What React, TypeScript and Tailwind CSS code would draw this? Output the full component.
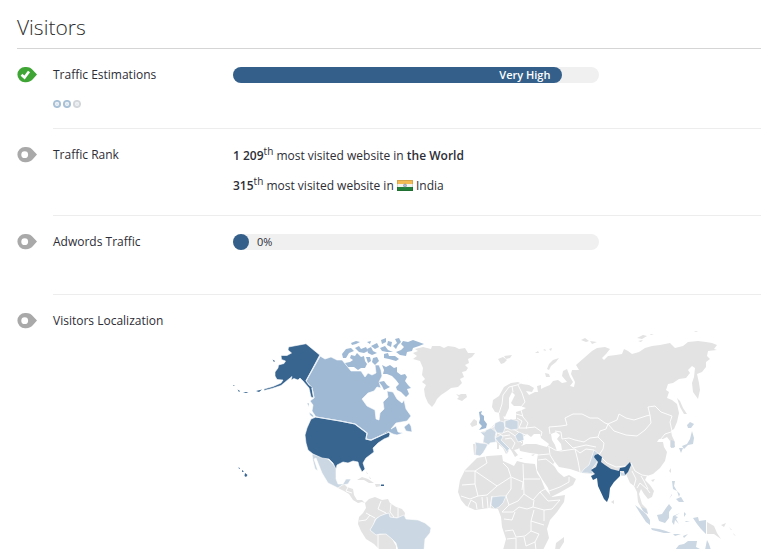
import React from 'react';

type Shape = { name: string; d: string };

const GREY = '#e3e3e3';
const PALE = '#cbd7e2';
const MEDIUM = '#9fb9d4';
const DARK = '#386590';

const greyLand: Shape[] = [
  { name: 'Greenland', d: 'M413 352L418 350L415 348L423 346L431 348L432 345L440 345L444 347L448 345L455 346L459 348L465 347L468 352L475 352L472 356L468 358L469 362L465 364L468 367L466 370L462 371L464 376L460 378L462 382L458 386L451 387L447 390L441 394L437 398L435 402L432 406L428 402L425 395L424 388L426 384L422 381L425 378L422 374L423 367L420 360L413 358L417 355Z' },
  { name: 'Iceland', d: 'M456 393L459 394L461 393L466 393L467 396L462 400L457 398L459 396Z' },
  { name: 'Central America', d: 'M338 487L341 485L344 483L347 486L353 488L354 494L357 499L362 499L365 502L362 501L358 502L353 499L349 493L344 490Z' },
  { name: 'Cuba', d: 'M357 479L362 476L368 478L374 482L369 482L364 479Z' },
  { name: 'Hispaniola', d: 'M375 483L380 483L381 485L376 486Z' },
  { name: 'South America north', d: 'M365 502L369 498L375 496L382 499L388 498L390 502L396 506L402 508L405 512L404 517L390 516L387 512L380 515L375 518L373 524L370 529L376 534L386 533L392 538L396 545L396 549L380 549L374 543L366 538L361 530L358 523L359 516L363 512L366 507Z' },
  { name: 'Russia and Asia', d: 'M522 383L529 384L534 387L532 391L526 390L529 394L535 391L538 391L537 385L541 384L541 388L545 386L550 384L553 380L558 379L562 382L567 381L562 375L563 370L567 368L570 376L573 381L570 385L574 386L575 381L571 373L572 369L579 369L576 364L584 357L592 350L597 347L605 346L610 348L606 353L602 357L604 359L608 355L616 354L622 353L624 348L628 350L632 353L639 351L645 347L652 345L660 344L670 342L675 347L683 345L688 341L698 340L706 341L712 342L717 344L714 348L717 349L708 350L707 355L710 358L706 361L706 366L702 371L697 373L699 382L700 389L698 398L693 391L692 382L694 376L695 367L692 365L688 369L690 372L686 377L679 378L673 382L668 383L666 389L669 391L667 397L672 399L677 403L679 412L677 421L674 428L671 430L672 435L675 441L674 447L670 446L670 440L667 436L663 438L659 438L657 441L663 441L664 446L667 451L665 460L660 467L653 473L647 475L645 479L650 484L654 490L652 496L648 498L644 493L641 488L639 493L642 503L647 508L648 513L643 510L638 501L637 491L634 485L630 482L626 473L620 471L610 469L600 474L591 473L582 472L570 468L559 466L555 461L553 463L558 471L564 476L569 474L576 478L573 484L559 492L551 496L548 487L542 478L537 469L537 459L538 453L530 452L520 450L519 446L526 443L536 443L547 446L549 443L541 437L540 433L534 433L531 436L527 433L523 436L523 443L518 448L514 449L518 454L515 456L511 449L503 441L499 439L506 444L509 450L506 453L503 447L495 440L487 442L484 449L480 454L474 454L473 443L483 442L485 434L481 431L488 429L494 424L500 420L499 412L503 412L504 418L510 419L516 418L516 411L522 409L526 407L520 405L514 405L511 402L515 394L512 391L509 397L509 407L505 416L500 412L495 411L492 406L493 399L499 395L504 386L511 382L518 381Z' },
  { name: 'Africa', d: 'M477 457L488 455L502 454L503 460L510 463L514 465L517 460L525 462L535 463L537 472L541 478L545 488L552 496L565 494L564 501L557 511L550 519L547 528L549 537L543 549L503 549L506 538L502 526L501 516L498 508L489 507L475 509L466 505L461 499L458 491L460 479L465 469L472 462Z' },
  { name: 'Madagascar', d: 'M564 536L564 541L559 549L555 549L556 542Z' },
  { name: 'Papua New Guinea', d: 'M707 521L714 525L717 532L721 538L714 533L707 533Z' },
];

// too small to carry an outline of their own
const greyIslands: Shape[] = [
  { name: 'Svalbard', d: 'M498 358L503 356L507 359L504 362L501 363Z M504 355L512 354L510 357L506 358Z' },
  { name: 'Franz Josef Land', d: 'M535 352L538 350L539 352Z M543 349L545 348L546 350Z M549 348L552 347L551 350Z' },
  { name: 'Novaya Zemlya', d: 'M547 368L549 363L553 359L559 357L556 361L551 365L549 369Z M545 372L549 373L550 376L546 376Z' },
  { name: 'Severnaya Zemlya', d: 'M581 339L585 337L589 340L586 341Z M590 340L597 341L592 343Z' },
  { name: 'New Siberian Islands', d: 'M637 337L643 334L647 335L642 338Z M638 340L643 339L641 341Z M650 333L654 333L651 334Z M694 330L698 330L696 331Z' },
  { name: 'Sakhalin', d: 'M677 397L680 400L683 407L687 413L684 413L680 406Z' },
  { name: 'Ireland', d: 'M470 423L474 418L477 420L477 424L472 426Z' },
  { name: 'Taiwan and Hainan', d: 'M669 470L671 467L671 472Z M651 479L655 478L653 481Z' },
  { name: 'Sri Lanka', d: 'M611 501L614 499L614 503Z' },
  { name: 'Bahamas', d: 'M366 470L368 473L367 473Z M369 475L371 478L370 478Z' },
  { name: 'Bismarck Islands', d: 'M721 524L726 522L724 526Z M729 526L732 529L731 529Z M733 532L736 535L734 534Z' },
  { name: 'Sardinia and Crete', d: 'M497 442L499 442L499 448L497 448Z M519 457L523 457L521 458Z' },
  { name: 'Cyprus', d: 'M531 454L535 453L533 455Z' },
];

const paleLand: Shape[] = [
  { name: 'Mexico', d: 'M312 453L322 456L328 458L333 463L336 467L336 478L338 483L343 483L346 478L351 478L348 483L342 484L338 487L328 482L322 472L316 457L314 458L318 470L315 468L313 460Z' },
  { name: 'Brazil', d: 'M385 513L389 512L390 516L397 517L404 514L406 518L418 519L425 522L431 527L430 532L425 538L424 549L398 549L396 542L392 538L386 533L380 533L376 534L370 529L373 524L376 518L380 515Z' },
  { name: 'Spain', d: 'M475 441L480 442L488 443L486 447L483 452L480 455L475 454L476 446Z' },
  { name: 'France', d: 'M480 431L485 431L486 429L491 427L496 431L495 436L496 441L490 442L489 444L483 441L484 435Z' },
  { name: 'Germany', d: 'M495 422L500 420L504 421L505 427L503 432L497 432L494 427Z' },
  { name: 'Poland', d: 'M505 420L511 418L518 420L518 428L511 429L505 426Z' },
  { name: 'Italy', d: 'M495 437L501 434L503 436L501 439L505 443L510 448L508 449L508 453L505 448L498 441Z' },
  { name: 'Romania', d: 'M515 435L519 431L523 433L524 439L518 441Z' },
  { name: 'Nigeria', d: 'M492 496L500 495L506 495L503 502L499 506L495 508L491 504Z' },
  { name: 'Pakistan', d: 'M594 449L599 453L597 461L592 468L593 473L587 472L581 472L584 468L589 464Z' },
  { name: 'Bangladesh', d: 'M619 470L624 472L626 475L621 475Z' },
];

const paleIslands: Shape[] = [
  { name: 'Japan', d: 'M692 430L694 437L693 443L688 444L684 448L682 445L687 443L690 438Z M687 424L690 421L694 423L691 427L688 427Z M679 447L683 447L681 452Z' },
  { name: 'South Korea', d: 'M671 439L674 440L675 446L671 447Z' },
  { name: 'Philippines', d: 'M672 480L675 480L674 485L677 490L673 488Z M677 490L680 493L679 496Z M676 498L681 496L684 501L679 501Z M669 498L672 493L672 494Z' },
  { name: 'Malaysia', d: 'M641 506L646 508L648 513L644 511Z' },
  { name: 'Sumatra', d: 'M635 504L639 507L646 513L650 519L650 524L646 521L640 512Z' },
  { name: 'Java', d: 'M651 527L659 528L666 530L671 532L664 532L652 529Z M673 533L681 533L675 535Z M683 535L688 533L684 537Z' },
  { name: 'Borneo', d: 'M657 514L662 513L666 507L669 503L672 507L669 511L669 517L665 522L659 520Z' },
  { name: 'Sulawesi', d: 'M673 515L680 512L675 515L678 516L676 518L679 523L675 519L674 524L672 521Z' },
  { name: 'Moluccas', d: 'M684 511L686 513L684 516Z M685 520L690 520L686 521Z' },
  { name: 'West Papua', d: 'M693 517L698 516L699 520L706 519L706 533L701 528L697 523Z' },
  { name: 'Australia', d: 'M675 549L679 544L684 543L688 540L697 540L696 546L702 549Z M705 549L707 539L709 543L711 549Z' },
];

const mediumLand: Shape[] = [
  { name: 'Canada', d: 'M320 355L325 358L331 356L337 359L342 359L347 365L351 370L357 370L361 370L365 376L368 372L372 374L376 372L375 364L379 364L381 369L382 375L379 381L381 387L377 386L374 390L368 392L362 398L367 405L375 409L376 418L379 419L380 412L384 408L383 401L388 396L387 390L393 391L397 398L402 402L404 399L406 408L411 415L407 420L396 422L391 428L396 425L398 431L403 432L397 434L393 433L389 431L380 435L371 439L366 438L367 432L355 423L340 420L316 416L312 410L313 404L310 400L314 397L312 387L306 380Z' },
  { name: 'Newfoundland', d: 'M404 426L409 422L411 425L412 431L406 430Z' },
  { name: 'Vancouver Island', d: 'M309 411L313 414L314 417L310 414Z' },
  { name: 'Haida Gwaii', d: 'M307 402L309 402L309 406Z' },
];

const arcticIslands: Shape[] = [
  { name: 'Baffin Island', d: 'M382 364L386 366L390 364L394 367L397 366L397 371L401 374L405 373L407 376L405 380L408 384L411 387L407 388L409 393L406 396L401 391L397 389L396 386L399 383L396 379L392 375L387 373L383 373L384 369Z' },
  { name: 'Southampton Island', d: 'M379 381L384 380L387 384L390 386L384 389L382 385Z' },
  { name: 'Ellesmere Island', d: 'M403 340L408 341L413 339L424 343L419 345L413 347L412 350L407 351L406 355L400 354L396 351L401 349L404 346L401 343Z' },
  { name: 'Axel Heiberg', d: 'M395 338L399 337L401 341L398 344L396 348L393 345L397 342Z' },
  { name: 'Devon Island', d: 'M384 353L388 352L389 355L395 355L399 358L396 360L389 358L384 357Z' },
  { name: 'Victoria Island', d: 'M351 354L355 355L357 352L361 356L364 355L365 360L367 363L365 367L361 367L358 369L354 366L348 366L345 362L350 361L353 359L350 357Z' },
  { name: 'Banks Island', d: 'M342 353L346 348L351 347L354 350L349 352L346 357L343 357Z' },
  { name: 'Prince of Wales Island', d: 'M366 356L370 356L371 360L368 362Z' },
  { name: 'Somerset Island', d: 'M373 357L377 356L379 360L375 364L372 361Z' },
  { name: 'Melville Island', d: 'M355 347L359 345L361 348L366 346L368 350L364 352L359 351Z' },
  { name: 'Prince Patrick Island', d: 'M351 342L356 340L360 341L356 343L352 344Z' },
  { name: 'Bathurst Island', d: 'M367 348L371 346L373 350L377 352L372 354L368 352Z' },
  { name: 'Ringnes Islands', d: 'M367 341L371 340L370 343Z M371 345L377 342L379 346L375 348Z M381 339L386 337L386 341L382 343Z M380 347L385 345L388 349L393 351L387 351L382 350Z M388 340L392 341L391 346L387 344Z' },
];

const darkLand: Shape[] = [
  { name: 'Alaska', d: 'M288.5 346L306 342.7L319.7 354L306 380L309 384L312 386L313.5 397L311 396L309 387L303 380L300 377L298 379L294 377.5L291 379L292 375.5L287 379.5L281 384.5L272 387.5L264 389.5L264 388L273 385.5L281 382L283 379L277 378.5L275 375L275 371L278 367L278.5 364L284 362.5L285.5 360L281.5 358.5L281 354.5L287 354.5L291.5 352L288 349Z' },
  { name: 'United States', d: 'M316 416L340 420L355 423L367 432L366 438L371 439L380 435L388 430L390 433L389 436L384 438L378 442L373 447L374 451L366 457L363 462L365 468L362 471L359 465L358 461L353 460L348 462L343 461L337 464L336 468L333 462L329 458L322 457L313 453L308 449L306 442L305 434L307 427L311 418Z' },
];

const darkIslands: Shape[] = [
  { name: 'Hawaii', d: 'M245 472L247.5 474L246 476L244.5 475Z M242 469L244 470.5L242 471Z M238 466.5L240 467L239.5 468Z' },
  { name: 'Puerto Rico', d: 'M381 483.5L384 483.5L384 485L381 485Z' },
  { name: 'Aleutian Islands', d: 'M256 390L262 388.5L259 391Z M237.5 388.5L240 390L239 391Z M243 391L248.5 391L246 392Z M233 384L234.5 384L234 385Z' },
  { name: 'Saint Lawrence Island', d: 'M272.5 358.5L275 360L274 361Z' },
];

const india =
  'M595 454L598 453L602 456L601 461L605 464L611 468L619 470L620 467L625 466L630 461L631 464L628 471L625 474L624 470L620 470L620 475L614 481L610 487L609 496L607 501L604 498L598 485L597 477L593 479L591 475L595 473L591 469L596 466L598 461L594 456Z';

// country outlines that run inside the grey land masses
const borders = [
  // Nordics and eastern Europe
  'M499 412L502 403L503 394L509 386L517 384L521 382', 'M513 391L512 385', 'M518 384L522 392L525 401L521 406',
  'M521 409L523 416L528 422L526 427L535 426L542 431L541 435', 'M516 413L523 415', 'M517 417L522 420L519 427L527 427',
  'M505 419L505 427L515 429L520 432L526 434', 'M502 432L508 430L514 434L522 442', 'M496 431L503 435L510 434', 'M505 438L511 437L515 442L512 448', 'M487 429L495 425L497 431L495 439',
  // Kazakhstan, Mongolia, China
  'M550 433L549 426L561 425L567 424L565 417L573 413L582 413L590 417L598 417L605 422L608 423L606 428L600 430L598 436L590 437L584 441L575 439L569 437L562 438L561 431L555 430',
  'M608 423L617 419L619 413L626 417L634 419L646 415L650 414L648 406L655 405L661 411L672 415L670 421L672 430', 'M608 423L614 430L626 434L637 435L645 429L651 422L650 414',
  'M598 436L604 442L603 448L599 454L607 462L616 466L626 465L631 462L635 470L642 474L648 475', 'M660 439L665 433L671 431',
  // Middle East
  'M548 445L555 449L561 450L575 448L580 452L586 448L594 449', 'M565 439L573 447L586 444L596 446', 'M575 448L578 460L580 471', 'M549 446L550 454L555 462', 'M538 454L549 453', 'M538 459L546 458L556 466', 'M549 490L560 486L569 481L569 476',
  // Indochina
  'M632 470L636 478L634 485', 'M637 487L640 482L647 488L650 492', 'M641 475L644 480L648 488',
  // Africa
  'M485 455L487 462L475 470L465 470', 'M475 470L475 483L462 484', 'M475 470L497 485L511 476L508 467L503 462', 'M523 463L524 493', 'M523 478L540 478', 'M511 476L523 481L522 489', 'M475 483L478 495L487 494L497 485', 'M478 495L470 498L461 495', 'M468 506L471 499L476 502L477 508', 'M482 496L483 507', 'M487 496L488 507', 'M506 495L511 488L511 477', 'M506 495L509 504L518 500L524 493L533 499L540 491L545 488', 'M509 504L502 511L513 511L519 506L527 508L533 506L534 499', 'M540 491L548 500L560 499L552 508L544 509L533 506', 'M544 509L544 520', 'M534 509L531 520L544 524', 'M504 518L512 519L515 511', 'M505 530L513 529L516 536L525 535L531 530L531 520', 'M507 538L516 537L516 549', 'M524 536L526 545L535 541L539 533L531 530', 'M535 541L536 549', 'M492 495L490 507',
  // Andes and Guianas
  'M381 500L378 508L386 512', 'M366 512L375 517', 'M359 520L366 519L370 514', 'M391 503L390 511L394 516', 'M398 507L398 516', 'M378 534L378 548', 'M348 486L346 490L352 492',
];

interface LandGroupProps {
  shapes: Shape[];
  fill: string;
  outlined?: boolean;
}

const LandGroup: React.FC<LandGroupProps> = ({ shapes, fill, outlined }) => (
  <g fill={fill} stroke={outlined ? '#ffffff' : 'none'} strokeWidth="0.6" strokeLinejoin="round">
    {shapes.map((shape) => (
      <path key={shape.name} d={shape.d} />
    ))}
  </g>
);

const VisitorsMap: React.FC = () => (
  <svg viewBox="233 312 528 237" className="block w-full" role="img" aria-label="Visitors Localization">
    <LandGroup shapes={greyLand} fill={GREY} />
    <LandGroup shapes={greyIslands} fill={GREY} />
    <g fill="none" stroke="#ffffff" strokeWidth="0.9" strokeLinejoin="round">
      {borders.map((d) => (
        <path key={d} d={d} />
      ))}
    </g>
    {/* Caspian Sea */}
    <path d="M551 433L556 431L560 434L557 438L561 443L562 449L557 450L555 444L552 439Z" fill="#ffffff" />
    <LandGroup shapes={paleLand} fill={PALE} outlined />
    <LandGroup shapes={paleIslands} fill={PALE} />
    <LandGroup shapes={mediumLand} fill={MEDIUM} outlined />
    <LandGroup shapes={arcticIslands} fill={MEDIUM} />
    {/* Great Britain */}
    <path d="M479 411L482 410L481 413L484 415L484 419L487 423L486 427L479 429L482 425L479 422L480 418Z" fill={MEDIUM} />
    <LandGroup shapes={darkLand} fill={DARK} outlined />
    <LandGroup shapes={darkIslands} fill={DARK} />
    <path d={india} fill="#2e5c88" />
    <path d="M306 380L320 355M312 387L314 397M316 416L340 420L355 423L367 432L366 438L371 439L380 435L389 431" fill="none" stroke="#e9f0f7" strokeWidth="1.2" />
  </svg>
);

const StatusIcon: React.FC<{ passed?: boolean }> = ({ passed }) => (
  <svg width="20" height="16" viewBox="0 0 20 16" className="block" aria-hidden="true">
    <path d="M8 0H9C12 0 14.5 1.2 16.2 3.4L20 7.6L16.2 11.8C14.5 14 12 15.2 9 15.2H8A7.6 7.6 0 0 1 8 0Z" fill={passed ? '#3fa535' : '#a9a9a9'} />
    {passed ? (
      <path d="M4.5 7.8L7.5 10.5L12 4.5" fill="none" stroke="#ffffff" strokeWidth="2.6" />
    ) : (
      <circle cx="7.7" cy="7.7" r="3.4" fill="#ffffff" />
    )}
  </svg>
);

const ImpactDots: React.FC = () => (
  <svg width="28" height="8" viewBox="0 0 28 8" className="block" aria-hidden="true">
    {['#a9c1d6', '#a9c1d6', '#d3d7db'].map((color, index) => (
      <g key={index}>
        <circle cx={4 + index * 10} cy="4" r="3.1" fill="#eef2f6" stroke={color} strokeWidth="1.9" />
        <circle cx={4 + index * 10} cy="4" r="0.6" fill={color} />
      </g>
    ))}
  </svg>
);

const IndiaFlag: React.FC = () => (
  <svg width="16" height="11" viewBox="0 0 16 11" className="inline-block align-[-1px]" aria-hidden="true">
    <rect width="16" height="4" fill="#f5bc55" />
    <rect y="4" width="16" height="3" fill="#f4f4ee" />
    <rect y="7" width="16" height="4" fill="#24803a" />
    <rect x=".5" y=".5" width="15" height="10" fill="none" stroke="#000000" strokeOpacity=".12" />
    <circle cx="8" cy="5.5" r="1.5" fill="#b9bfc9" stroke="#7d879b" strokeWidth=".6" />
  </svg>
);

interface RowProps {
  label: string;
  passed?: boolean;
  dots?: boolean;
  last?: boolean;
  children: React.ReactNode;
}

const Row: React.FC<RowProps> = ({ label, passed, dots, last, children }) => (
  <section className="flex">
    <div className="w-9 shrink-0 pt-[18px]">
      <StatusIcon passed={passed} />
    </div>
    <div className={`flex min-w-0 flex-1 pt-[18px] ${last ? '' : 'min-h-[79px] border-b border-[#ededed] pb-5'}`}>
      <div className="w-[180px] shrink-0">
        <h2 className="text-[12px] leading-4">{label}</h2>
        {dots && (
          <div className="mt-4 pt-px">
            <ImpactDots />
          </div>
        )}
      </div>
      <div className="min-w-0 flex-1">{children}</div>
    </div>
  </section>
);

const App: React.FC = () => {
  return (
    <main className="bg-white pl-[17px] pr-3 font-['Open_Sans',sans-serif] text-[12px] text-[#2d2d36]">
      <h1 className="border-b border-[#d5d5d5] pt-[13px] pb-[7px] text-[21px] leading-7 font-light text-[#2b2b2b]">Visitors</h1>

      <Row label="Traffic Estimations" passed dots>
        <div className="h-4 w-full max-w-[366px] rounded-full bg-[#f0f0f0]">
          <div className="h-4 w-[90%] rounded-full bg-[#335f8a] pr-3 text-right text-[11px] leading-4 font-semibold text-white">
            Very High
          </div>
        </div>
      </Row>

      <Row label="Traffic Rank">
        <div className="space-y-3 leading-[18px]">
          <p>
            <span className="font-semibold">1 209</span>
            <sup className="text-[10px]">th</sup> most visited website in <span className="font-semibold">the World</span>
          </p>
          <p>
            <span className="font-semibold">315</span>
            <sup className="text-[10px]">th</sup> most visited website in <IndiaFlag /> India
          </p>
        </div>
      </Row>

      <Row label="Adwords Traffic">
        <div className="flex h-4 w-full max-w-[366px] items-center gap-2 rounded-full bg-[#f0f0f0]">
          <div className="size-4 rounded-full bg-[#335f8a]" />
          <span className="text-[11px] leading-4">0%</span>
        </div>
      </Row>

      <Row label="Visitors Localization" last>
        <VisitorsMap />
      </Row>
    </main>
  );
};

export default App;
